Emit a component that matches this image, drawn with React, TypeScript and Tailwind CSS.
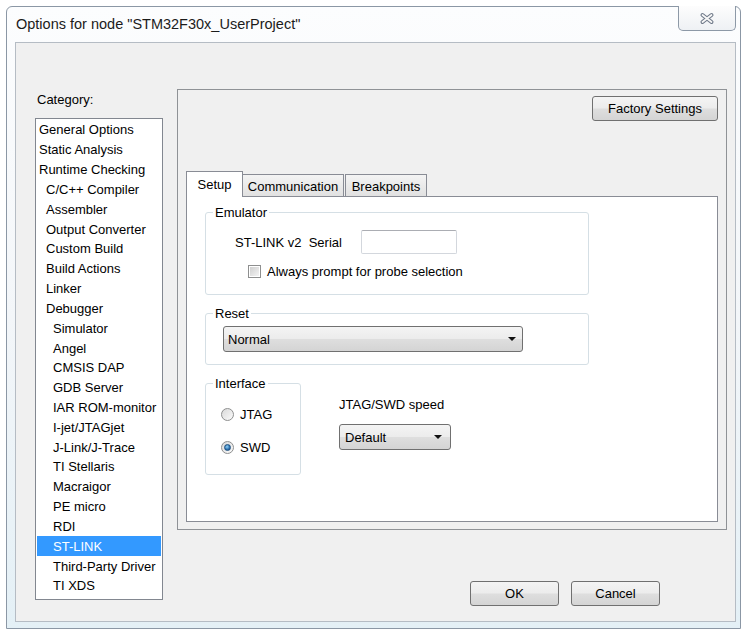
const categories: [string, number][] = [
  ['General Options', 0],
  ['Static Analysis', 0],
  ['Runtime Checking', 0],
  ['C/C++ Compiler', 1],
  ['Assembler', 1],
  ['Output Converter', 1],
  ['Custom Build', 1],
  ['Build Actions', 1],
  ['Linker', 1],
  ['Debugger', 1],
  ['Simulator', 2],
  ['Angel', 2],
  ['CMSIS DAP', 2],
  ['GDB Server', 2],
  ['IAR ROM-monitor', 2],
  ['I-jet/JTAGjet', 2],
  ['J-Link/J-Trace', 2],
  ['TI Stellaris', 2],
  ['Macraigor', 2],
  ['PE micro', 2],
  ['RDI', 2],
  ['ST-LINK', 2],
  ['Third-Party Driver', 2],
  ['TI XDS', 2],
];

const indent = ['pl-[2px]', 'pl-[9px]', 'pl-[16px]'];

const winGradient =
  'bg-[linear-gradient(#f4f4f4,#ececec_48%,#dedede_52%,#d4d4d4)]';

function Arrow() {
  return (
    <svg width="8" height="4" viewBox="0 0 8 4">
      <path d="M0 0h8L4 4z" fill="#111" />
    </svg>
  );
}

function Combo({ text, className }: { text: string; className: string }) {
  return (
    <div
      className={`flex items-center justify-between rounded-[3px] border border-[#707070] ${winGradient} ${className}`}
    >
      <span>{text}</span>
      <Arrow />
    </div>
  );
}

function Button({ label, className }: { label: string; className: string }) {
  return (
    <div
      className={`flex h-[25px] items-center justify-center rounded-[3px] border border-[#707070] ${winGradient} ${className}`}
    >
      {label}
    </div>
  );
}

function Radio({ checked }: { checked?: boolean }) {
  return (
    <div className="flex h-[13px] w-[13px] items-center justify-center rounded-full border border-[#8e8f8f] bg-gradient-to-br from-[#d9d9d9] to-[#fbfbfb]">
      {checked && (
        <div className="h-[7px] w-[7px] rounded-full border border-[#1c4f7f] bg-[radial-gradient(circle_at_40%_35%,#8fd0f4,#2a6fae_60%,#1a4a7d)]" />
      )}
    </div>
  );
}

export default function App() {
  return (
    <div className="h-[638px] w-[750px] overflow-hidden bg-white pl-[6px] pt-[6px] font-['Liberation_Sans',Arial,sans-serif] text-[13px] leading-[15px] text-black">
      <div className="flex h-[623px] w-[735px] flex-col rounded-t-[6px] border border-[#8b97a5] bg-gradient-to-b from-[#fcfdfe] via-[#f3f6f9] to-[#e4f0f6] pb-[6px] pl-[8px] pr-[4px]">
        {/* title bar */}
        <div className="flex h-[35px] shrink-0 items-start justify-between">
          <div className="pl-[1px] pt-[9px] text-[14.5px] leading-[17px] text-[#1b1b1b]">
            Options for node "STM32F30x_UserProject"
          </div>
          <div className="mt-[-1px] flex h-[25px] w-[58px] items-center justify-center rounded-b-[5px] border border-t-0 border-[#8d99a7] bg-gradient-to-b from-[#fdfdfd] to-[#eef1f4]">
            <svg width="16" height="13" viewBox="0 0 16 13">
              <path d="M3.5 3l9 7M12.5 3l-9 7" stroke="#6f7989" strokeWidth="4" strokeLinecap="round" />
              <path d="M3.5 3l9 7M12.5 3l-9 7" stroke="#f7f7f7" strokeWidth="1.8" strokeLinecap="round" />
            </svg>
          </div>
        </div>

        {/* client area */}
        <div className="flex flex-1 border border-[#b5bcc4] bg-[#f0f0f0]">
          <div className="pl-[19px] pt-[49px]">
            <div className="pl-[2px]">Category:</div>
            <div className="mt-[11px] h-[482px] w-[128px] border border-[#828790] bg-white pt-[1px]">
              {categories.map(([name, level]) => {
                const selected = name === 'ST-LINK';
                return (
                  <div
                    key={name}
                    className={`mx-[1px] flex h-[19.83px] items-center whitespace-nowrap ${indent[level]} ${
                      selected ? 'bg-[#3399ff] text-white' : ''
                    }`}
                  >
                    {name}
                  </div>
                );
              })}
            </div>
          </div>

          <div className="ml-[14px] flex flex-col pt-[46px]">
            <div className="flex h-[441px] w-[550px] flex-col border border-[#8f9296]">
              <Button label="Factory Settings" className="mr-[8px] mt-[6px] w-[126px] self-end" />

              <div className="ml-[8px] mt-[50px] flex h-[25px] items-end">
                <div className="relative z-10 mb-[-1px] flex h-[26px] w-[57px] items-center justify-center border border-b-0 border-[#898c95] bg-white">
                  Setup
                </div>
                <div className="flex h-[22px] w-[101px] items-center justify-center border border-b-0 border-l-0 border-[#898c95] bg-gradient-to-b from-[#f4f4f4] to-[#e1e1e1] pt-[1px]">
                  Communication
                </div>
                <div className="ml-[1px] flex h-[22px] w-[82px] items-center justify-center border border-b-0 border-[#898c95] bg-gradient-to-b from-[#f4f4f4] to-[#e1e1e1] pt-[1px]">
                  Breakpoints
                </div>
              </div>

              <div className="mx-[8px] mb-[7px] flex flex-1 flex-col border border-[#898c95] bg-white pl-[18px] pt-[8px]">
                <fieldset className="w-[384px] rounded-[3px] border border-[#d5dfe5] pb-[15px]">
                  <legend className="ml-[7px] px-[2px]">Emulator</legend>
                  <div className="mt-[10px] flex h-[24px] items-center pl-[29px]">
                    <span className="whitespace-pre">ST-LINK v2  Serial</span>
                    <div className="ml-[19px] h-[24px] w-[96px] rounded-[2px] border border-[#d3d7dd] border-t-[#abadb3] bg-white" />
                  </div>
                  <div className="mt-[10px] flex h-[15px] items-center pl-[42px]">
                    <div className="flex h-[13px] w-[13px] items-center justify-center border border-[#8e8f8f] bg-white">
                      <div className="h-[9px] w-[9px] bg-gradient-to-br from-[#cfcfcf] to-[#f4f4f4]" />
                    </div>
                    <span className="ml-[6px]">Always prompt for probe selection</span>
                  </div>
                </fieldset>

                <fieldset className="mt-[11px] w-[384px] rounded-[3px] border border-[#d5dfe5] pb-[12px]">
                  <legend className="ml-[7px] px-[2px]">Reset</legend>
                  <Combo text="Normal" className="ml-[17px] mt-[5px] h-[26px] w-[300px] pl-[4px] pr-[6px]" />
                </fieldset>

                <div className="mt-[11px] flex items-start">
                  <fieldset className="w-[96px] rounded-[3px] border border-[#d5dfe5] pb-[19px] pl-[15px]">
                    <legend className="ml-[-8px] px-[2px]">Interface</legend>
                    <div className="mt-[16px] flex h-[15px] items-center">
                      <Radio />
                      <span className="ml-[6px]">JTAG</span>
                    </div>
                    <div className="mt-[18px] flex h-[15px] items-center">
                      <Radio checked />
                      <span className="ml-[6px]">SWD</span>
                    </div>
                  </fieldset>
                  <div className="ml-[38px] pt-[21px]">
                    <div>JTAG/SWD speed</div>
                    <Combo text="Default" className="mt-[12px] h-[26px] w-[112px] pl-[5px] pr-[8px]" />
                  </div>
                </div>
              </div>
            </div>

            <div className="mt-[51px] flex justify-end gap-[12px] pr-[67px]">
              <Button label="OK" className="w-[89px]" />
              <Button label="Cancel" className="w-[89px]" />
            </div>
          </div>
        </div>
      </div>
    </div>
  );
}
